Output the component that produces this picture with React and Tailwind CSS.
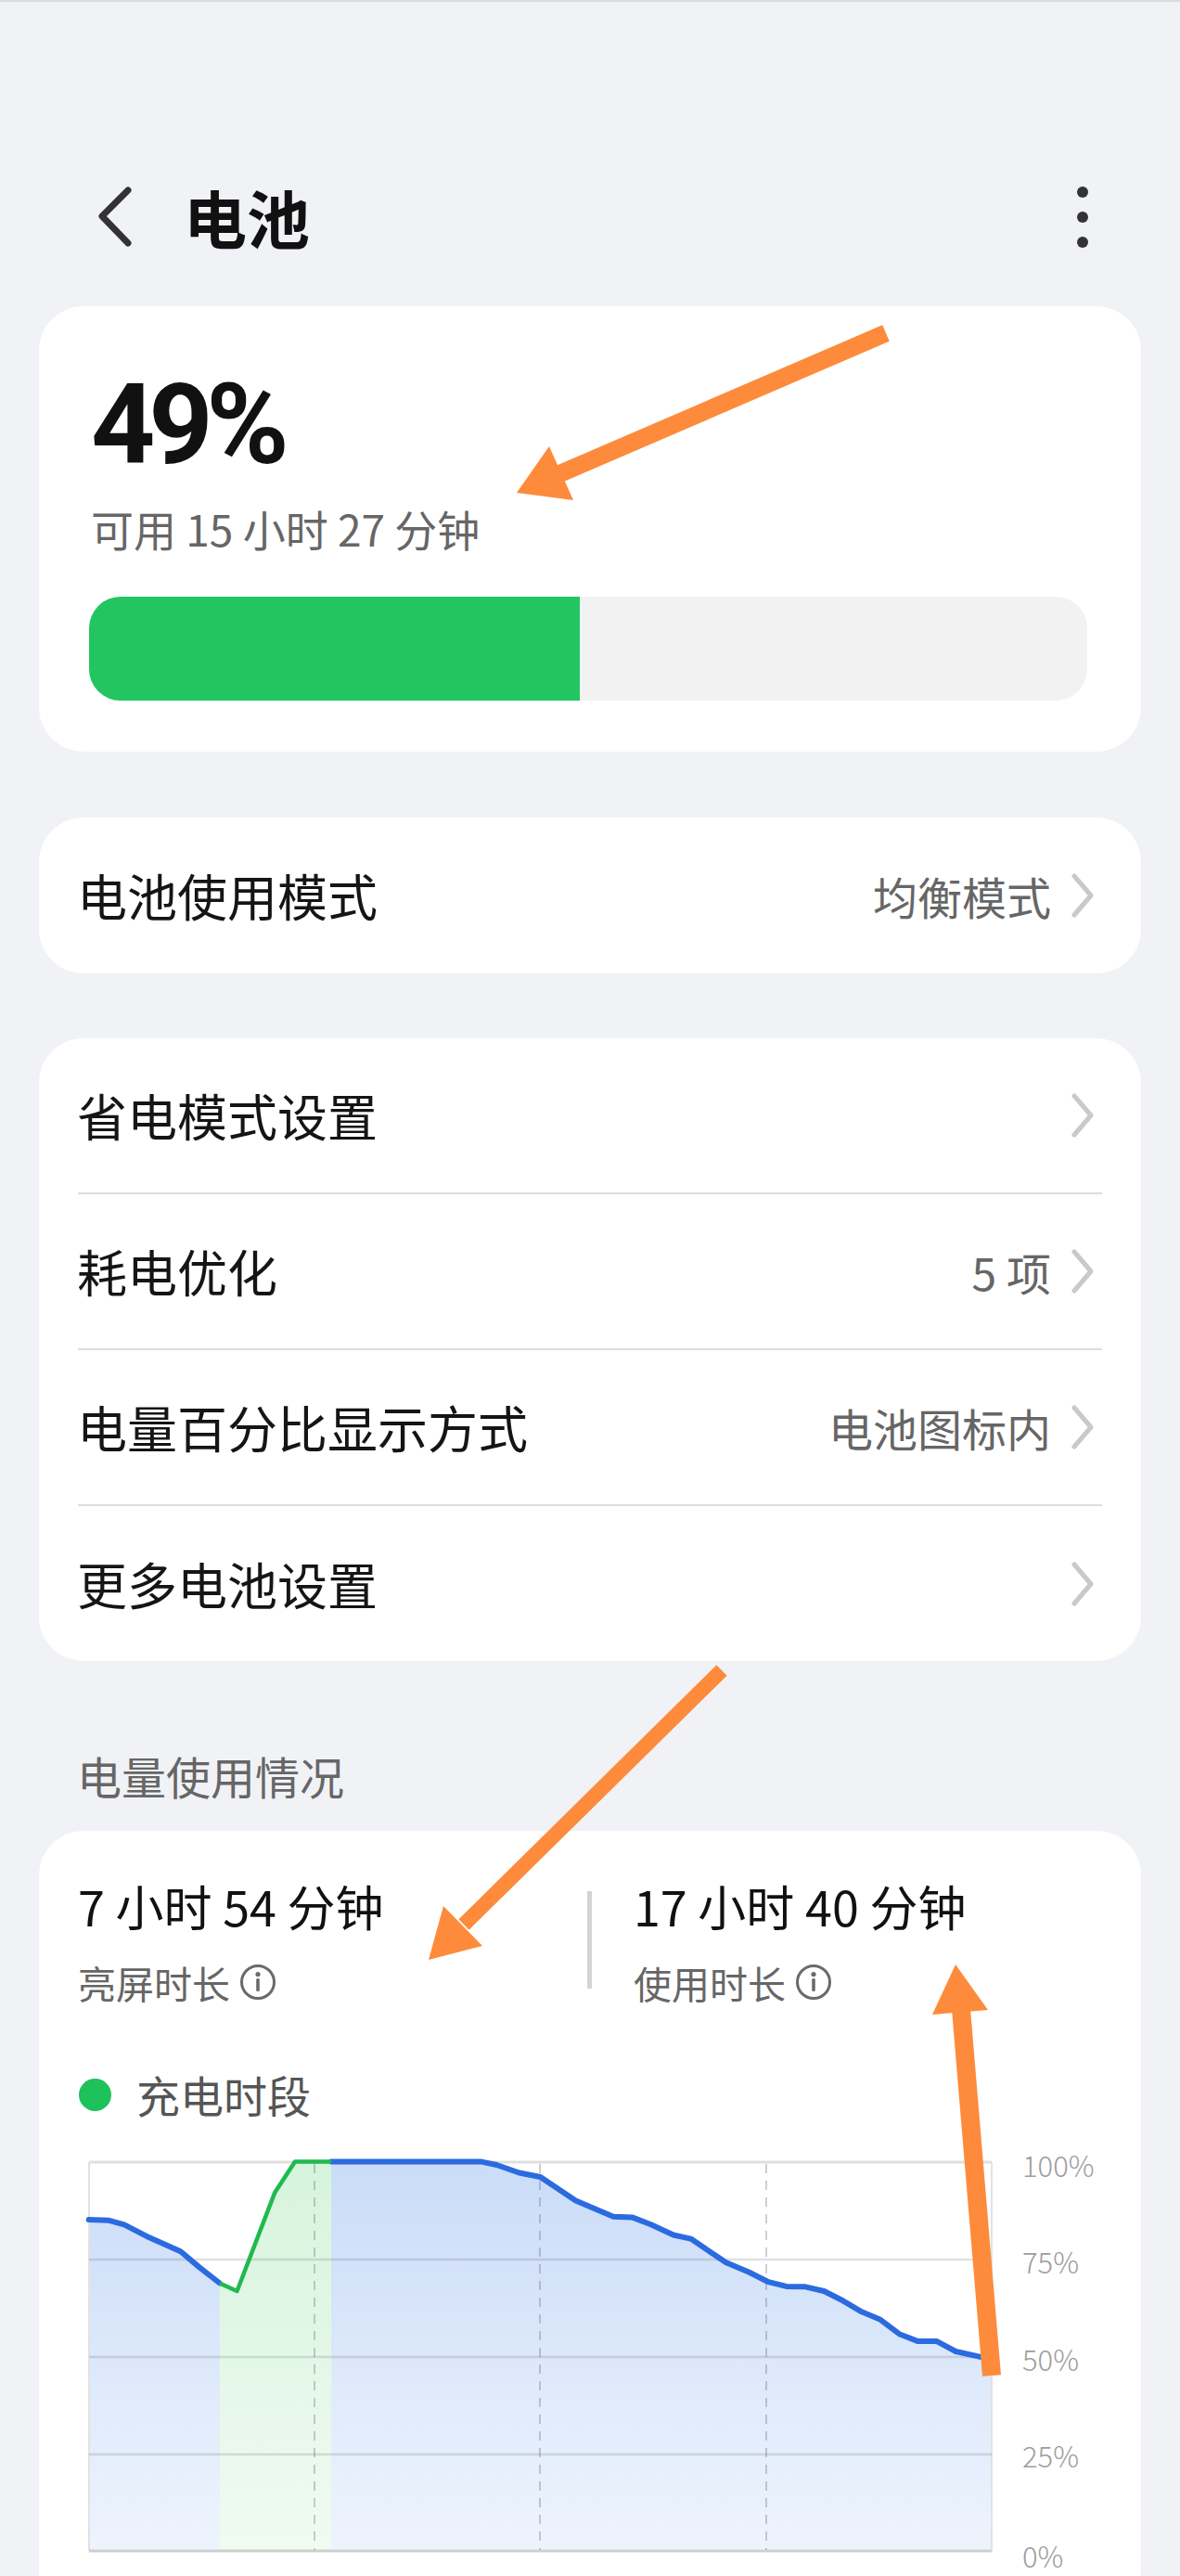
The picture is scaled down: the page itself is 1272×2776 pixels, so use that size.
import React from "react";

const bluePts = [
  [95.7, 2392.1], [117.6, 2392.8], [133.9, 2397.3], [158.2, 2409.9], [194.7, 2426.3],
  [215, 2443.4], [236.9, 2460.5],
];
const greenPts = [
  [236.9, 2460.5], [255.5, 2469], [296.1, 2363.1], [318, 2329.6], [357, 2329.6],
];
const blue2Pts = [
  [357, 2329.6], [519.2, 2329.6], [535.4, 2333], [559.7, 2341.5], [582.5, 2346],
  [620.6, 2371.6], [661.2, 2388.7], [681.4, 2389.4], [701.7, 2397.3], [726, 2408.5],
  [744.7, 2412.6], [782.8, 2438.3], [807.2, 2448.5], [827.5, 2458.8], [847.7, 2463.9],
  [868, 2464.3], [888.3, 2469], [908.6, 2479.3], [928.9, 2491.3], [949.1, 2499.8],
  [969.4, 2515.2], [989.7, 2523.1], [1010, 2523.1], [1030.3, 2534], [1069.2, 2542.6],
];

const toStr = (pts) => pts.map((p) => p.join(",")).join(" ");
const allPts = [...bluePts, ...greenPts.slice(1), ...blue2Pts.slice(1)];
const fillPoly = toStr([...allPts, [1069.2, 2749], [95.7, 2749]]);
const greenFill = toStr([...greenPts, [357, 2749], [236.9, 2749]]);

function Chevron() {
  return (
    <svg width="30" height="48" viewBox="0 0 30 48" className="shrink-0">
      <polyline
        points="5,3 23,24 5,45"
        fill="none"
        stroke="#c9c9c9"
        strokeWidth="5"
        strokeLinecap="round"
        strokeLinejoin="round"
      />
    </svg>
  );
}

function Row({ label, value, h }) {
  return (
    <div className={"flex items-center justify-between pl-[41px] pr-[47px] " + h}>
      <span className="text-[54px] leading-[70px] text-[#151515]">{label}</span>
      <div className="flex items-center">
        {value ? (
          <span className="mr-[20px] text-[48px] leading-[60px] text-[#666666]">{value}</span>
        ) : null}
        <Chevron />
      </div>
    </div>
  );
}

function Divider() {
  return <div className="mx-[42px] h-[2px] bg-[#dedede]" />;
}

function InfoIcon() {
  return (
    <svg width="40" height="40" viewBox="0 0 40 40" className="ml-[10px] shrink-0">
      <circle cx="20" cy="20" r="17.5" fill="none" stroke="#6a6a6a" strokeWidth="3" />
      <circle cx="20" cy="11.5" r="2.6" fill="#6a6a6a" />
      <rect x="18.2" y="16" width="3.6" height="14" rx="1.5" fill="#6a6a6a" />
    </svg>
  );
}

export default function App() {
  return (
    <div className="relative w-[1272px] overflow-hidden bg-[#f1f2f6] font-['Noto_Sans_CJK_SC',sans-serif]">
      {/* Header */}
      <div className="h-[330px] border-t-2 border-[#d9dbe0] pt-[195px]">
        <div className="flex h-[74px] items-center justify-between pl-[100px] pr-[99px]">
          <div className="flex items-center">
            <svg width="48" height="74" viewBox="0 0 48 74" className="shrink-0">
              <polyline
                points="38,8 10,36 38,65"
                fill="none"
                stroke="#333333"
                strokeWidth="7"
                strokeLinecap="round"
                strokeLinejoin="round"
              />
            </svg>
            <span className="ml-[50px] text-[68px] font-bold leading-[74px] text-[#111111]">电池</span>
          </div>
          <div className="flex flex-col gap-[15px]">
            <span className="block h-[12px] w-[12px] rounded-full bg-[#333333]" />
            <span className="block h-[12px] w-[12px] rounded-full bg-[#333333]" />
            <span className="block h-[12px] w-[12px] rounded-full bg-[#333333]" />
          </div>
        </div>
      </div>

      {/* Battery card */}
      <div className="mx-[42px] rounded-[48px] bg-white pb-[55px] pl-[56px] pr-[58px] pt-[69px]">
        <div className="h-[118px] font-['Roboto',sans-serif] text-[121px] font-bold leading-[118px] tracking-[-0.06em] text-[#111111]">
          49%
        </div>
        <div className="mt-[22px] text-[46px] leading-[60px] text-[#666666]">可用 15 小时 27 分钟</div>
        <div className="-ml-[2px] mt-[44px] h-[112px] overflow-hidden rounded-[34px] bg-[#f2f2f2]">
          <div className="h-full w-[49.2%] bg-[#23c560]" />
        </div>
      </div>

      {/* Mode card */}
      <div className="mx-[42px] mt-[71px] rounded-[48px] bg-white">
        <Row label="电池使用模式" value="均衡模式" h="h-[168px]" />
      </div>

      {/* Settings card */}
      <div className="mx-[42px] mt-[70px] rounded-[48px] bg-white">
        <Row label="省电模式设置" h="h-[166px]" />
        <Divider />
        <Row label="耗电优化" value="5 项" h="h-[166px]" />
        <Divider />
        <Row label="电量百分比显示方式" value="电池图标内" h="h-[166px]" />
        <Divider />
        <Row label="更多电池设置" h="h-[167px]" />
      </div>

      {/* Section title */}
      <div className="mt-[93px] pl-[83px] text-[48px] leading-[60px] text-[#666666]">电量使用情况</div>

      {/* Usage card */}
      <div className="mx-[42px] mt-[30px] rounded-[48px] bg-white pb-[40px] pt-[49px]">
        <div className="flex pl-[42px]">
          <div className="w-[549px]">
            <div className="text-[52px] leading-[64px] text-[#111111]">7 小时 54 分钟</div>
            <div className="mt-[22px] flex h-[56px] items-center">
              <span className="text-[41px] leading-[56px] text-[#666666]">亮屏时长</span>
              <InfoIcon />
            </div>
          </div>
          <div className="mt-[16px] h-[105px] w-[5px] bg-[#d4d4d4]" />
          <div className="pl-[45px]">
            <div className="text-[52px] leading-[64px] text-[#111111]">17 小时 40 分钟</div>
            <div className="mt-[22px] flex h-[56px] items-center">
              <span className="text-[41px] leading-[56px] text-[#666666]">使用时长</span>
              <InfoIcon />
            </div>
          </div>
        </div>

        <div className="mt-[63px] flex h-[60px] items-center pl-[43px]">
          <span className="block h-[35px] w-[35px] rounded-full bg-[#1fc15a]" />
          <span className="ml-[27px] text-[47px] leading-[60px] text-[#555555]">充电时段</span>
        </div>

        <svg
          width="1188"
          height="476"
          viewBox="42 2300 1188 476"
          className="mt-[13px] block"
        >
          <defs>
            <linearGradient id="blueFill" x1="0" y1="2330" x2="0" y2="2749" gradientUnits="userSpaceOnUse">
              <stop offset="0" stopColor="#cadcf8" />
              <stop offset="1" stopColor="#eef4fd" />
            </linearGradient>
            <linearGradient id="greenFill" x1="0" y1="2330" x2="0" y2="2749" gradientUnits="userSpaceOnUse">
              <stop offset="0" stopColor="#d6f4dd" />
              <stop offset="1" stopColor="#f0fbf2" />
            </linearGradient>
          </defs>
          <polygon points={fillPoly} fill="url(#blueFill)" />
          <polygon points={greenFill} fill="url(#greenFill)" />

          <line x1="96" y1="2330" x2="96" y2="2749" stroke="#e2e2e2" strokeWidth="2" />
          <line x1="1069" y1="2330" x2="1069" y2="2749" stroke="#e2e2e2" strokeWidth="2" />
          <line x1="96" y1="2330" x2="1069" y2="2330" stroke="#e0e0e0" strokeWidth="3" />
          {[2435, 2540, 2645].map((y) => (
            <line key={y} x1="96" y1={y} x2="1069" y2={y} stroke="rgba(60,70,90,0.16)" strokeWidth="2.5" />
          ))}
          <line x1="96" y1="2749" x2="1069" y2="2749" stroke="#cfcfcf" strokeWidth="3" />
          {[339, 582, 826].map((x) => (
            <line
              key={x}
              x1={x}
              y1="2332"
              x2={x}
              y2="2748"
              stroke="rgba(80,80,90,0.28)"
              strokeWidth="2"
              strokeDasharray="10 8"
            />
          ))}

          <polyline points={toStr(bluePts)} fill="none" stroke="#2b6be0" strokeWidth="6" strokeLinejoin="round" strokeLinecap="round" />
          <polyline points={toStr(blue2Pts)} fill="none" stroke="#2b6be0" strokeWidth="6" strokeLinejoin="round" strokeLinecap="round" />
          <polyline points={toStr(greenPts)} fill="none" stroke="#20b94f" strokeWidth="4.5" strokeLinejoin="round" />

          {[
            ["100%", 2332],
            ["75%", 2436],
            ["50%", 2541],
            ["25%", 2645],
            ["0%", 2753],
          ].map(([t, y]) => (
            <text
              key={t}
              x="1102"
              y={y}
              dominantBaseline="central"
              fontSize="31"
              fill="#9d9d9d"
              fontFamily="'Noto Sans CJK SC', sans-serif"
              fontWeight="300"
            >
              {t}
            </text>
          ))}
        </svg>
      </div>

      {/* Annotation arrows */}
      <svg
        width="1272"
        height="2776"
        viewBox="0 0 1272 2776"
        className="pointer-events-none absolute left-0 top-0"
      >
        <g fill="#fd8b3b" stroke="#fd8b3b">
          <line x1="955" y1="359" x2="600" y2="512" strokeWidth="19" />
          <polygon points="557,531 592,481 618,539" stroke="none" />
          <line x1="778" y1="1800" x2="500" y2="2074" strokeWidth="16" />
          <polygon points="462,2112 478,2054 520,2097" stroke="none" />
          <line x1="1069" y1="2560" x2="1036" y2="2165" strokeWidth="20" />
          <polygon points="1030,2117 1005,2171 1065,2166" stroke="none" />
        </g>
      </svg>
    </div>
  );
}
